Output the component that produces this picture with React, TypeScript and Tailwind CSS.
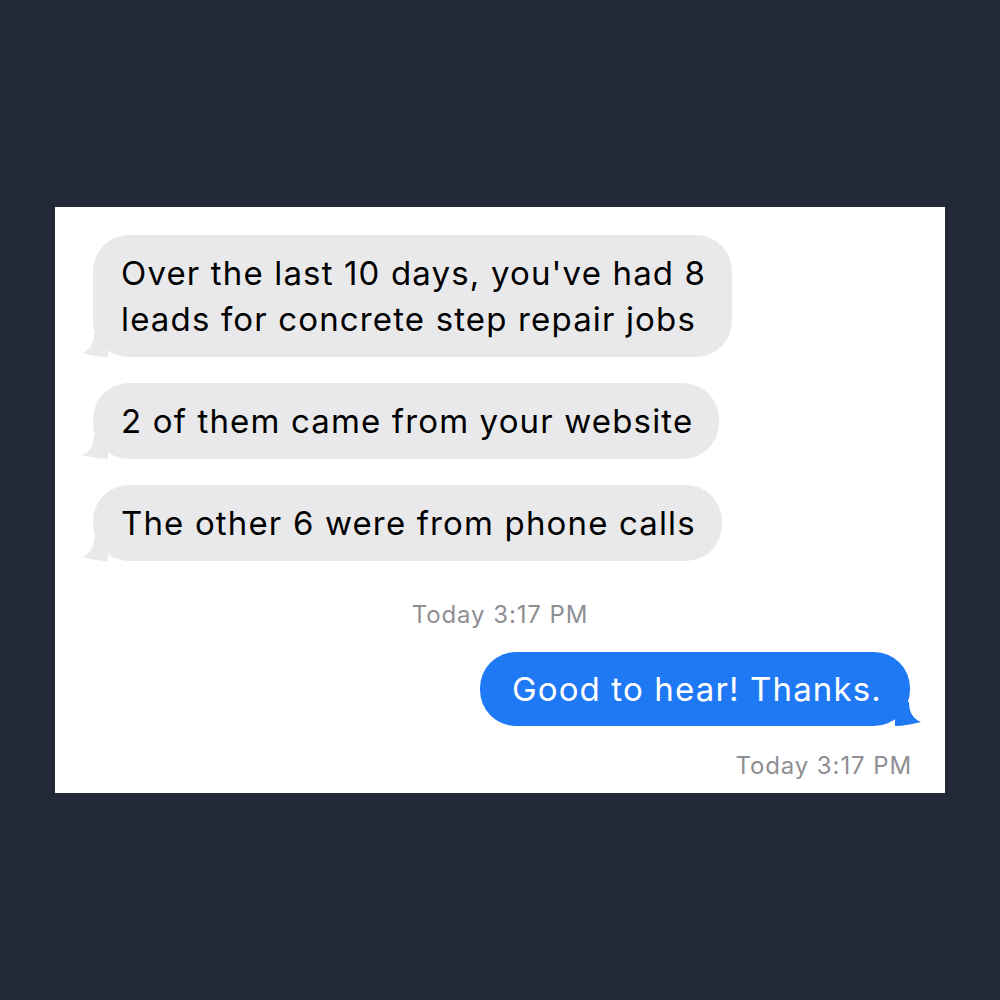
import React from "react";

function Tail({ side, color }: { side: "left" | "right"; color: string }) {
  // small curled tail at the bottom corner of a bubble
  if (side === "left") {
    return (
      <svg
        className="absolute bottom-0 left-[-11px]"
        width="26"
        height="24"
        viewBox="0 0 26 24"
      >
        <path d="M26 0 L26 24 C18 24 8 22 0 20 C8 17 12 10 12 0 Z" fill={color} />
      </svg>
    );
  }
  return (
    <svg
      className="absolute bottom-0 right-[-11px]"
      width="26"
      height="24"
      viewBox="0 0 26 24"
    >
      <path d="M0 0 L0 24 C8 24 18 22 26 20 C18 17 14 10 14 0 Z" fill={color} />
    </svg>
  );
}

function InBubble({ children }: { children: React.ReactNode }) {
  return (
    <div className="relative self-start">
      <Tail side="left" color="#e9e9eb" />
      <div className="relative rounded-[36px] bg-[#e9e9eb] pl-[28px] pr-[26px] py-[15px] text-[33px] leading-[46px] tracking-[1.15px] text-black">
        {children}
      </div>
    </div>
  );
}

export default function App() {
  return (
    <div
      className="flex h-screen w-full items-center justify-center bg-[#232838]"
      style={{ fontFamily: "Inter, 'Liberation Sans', sans-serif" }}
    >
      <div className="flex h-[586px] w-[890px] flex-col bg-white pt-[28px]">
        <div className="flex flex-col gap-[26px] pl-[38px]">
          <InBubble>
            Over the last 10 days, you've had 8
            <br />
            leads for concrete step repair jobs
          </InBubble>
          <InBubble>2 of them came from your website</InBubble>
          <InBubble>The other 6 were from phone calls</InBubble>
        </div>

        <div className="mt-[39px] text-center text-[24px] leading-[30px] tracking-[0.9px] text-[#8e8e93]">
          Today 3:17 PM
        </div>

        <div className="mt-[22px] flex justify-end pr-[35px]">
          <div className="relative">
            <Tail side="right" color="#2079f4" />
            <div className="relative rounded-[36px] bg-[#2079f4] pl-[32px] pr-[28px] py-[14px] text-[33px] leading-[46px] tracking-[1.15px] text-white">
              Good to hear! Thanks.
            </div>
          </div>
        </div>

        <div className="mt-[25px] pr-[33px] text-right text-[24px] leading-[30px] tracking-[0.9px] text-[#8e8e93]">
          Today 3:17 PM
        </div>
      </div>
    </div>
  );
}
